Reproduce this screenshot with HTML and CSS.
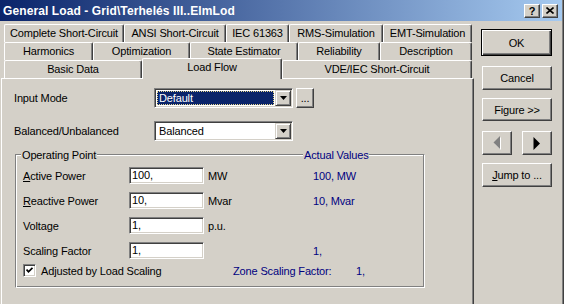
FILE: index.html
```html
<!DOCTYPE html>
<html lang="en">
<head>
  <meta charset="UTF-8">
  <meta name="viewport" content="width=device-width, initial-scale=1.0">
  <title>General Load - Load Flow</title>
  <link rel="stylesheet" href="styles.css">
</head>
<body>
  <div class="window">

    <div class="titlebar">
      <span class="title">General Load - Grid\Terhelés III..ElmLod</span>
      <button class="cap-btn help">?</button>
      <button class="cap-btn">
        <svg width="8" height="7" viewBox="0 0 8 7"><path d="M0.5 0.5 L7.5 6.5 M7.5 0.5 L0.5 6.5" stroke="#000" stroke-width="1.6"/></svg>
      </button>
    </div>

    <div class="main">
      <div class="tabctl">
        <div class="tabrow row1">
          <div class="tab">Complete Short-Circuit</div>
          <div class="tab">ANSI Short-Circuit</div>
          <div class="tab">IEC 61363</div>
          <div class="tab">RMS-Simulation</div>
          <div class="tab">EMT-Simulation</div>
        </div>
        <div class="tabrow row2">
          <div class="tab">Harmonics</div>
          <div class="tab">Optimization</div>
          <div class="tab">State Estimator</div>
          <div class="tab">Reliability</div>
          <div class="tab">Description</div>
        </div>
        <div class="tabrow row3">
          <div class="tab">Basic Data</div>
          <div class="tab sel">Load Flow</div>
          <div class="tab">VDE/IEC Short-Circuit</div>
        </div>

        <div class="panel">
          <div class="field-row">
            <span class="lbl">Input Mode</span>
            <div class="combo">
              <span class="combo-val focus">Default</span>
              <span class="drop"><svg width="7" height="4" viewBox="0 0 7 4"><path d="M0 0 H7 L3.5 4 Z" fill="#000"/></svg></span>
            </div>
            <button class="btn dots">...</button>
          </div>
          <div class="field-row second">
            <span class="lbl">Balanced/Unbalanced</span>
            <div class="combo">
              <span class="combo-val">Balanced</span>
              <span class="drop"><svg width="7" height="4" viewBox="0 0 7 4"><path d="M0 0 H7 L3.5 4 Z" fill="#000"/></svg></span>
            </div>
          </div>

          <div class="group">
            <div class="group-head">
              <span class="gline start"></span>
              <span class="gtitle">Operating Point</span>
              <span class="gline fill"></span>
              <span class="gtitle actual">Actual Values</span>
              <span class="gline end"></span>
            </div>
            <div class="group-body">
              <div class="values">
                <span><u>A</u>ctive Power</span>
                <div class="edit">100,</div>
                <span>MW</span>
                <span class="blue">100, MW</span>

                <span><u>R</u>eactive Power</span>
                <div class="edit">10,</div>
                <span>Mvar</span>
                <span class="blue">10, Mvar</span>

                <span>Voltage</span>
                <div class="edit">1,</div>
                <span>p.u.</span>
                <span></span>

                <span>Scaling Factor</span>
                <div class="edit">1,</div>
                <span></span>
                <span class="blue">1,</span>
              </div>
              <div class="check-row">
                <span class="checkbox">
                  <svg width="7" height="7" viewBox="0 0 7 7"><path d="M0.5 2.5 L2.5 4.8 L6.5 0.8" stroke="#000" stroke-width="1.8" fill="none"/></svg>
                </span>
                <span class="check-lbl">Adjusted by Load Scaling</span>
                <span class="blue zone">Zone Scaling Factor:</span>
                <span class="blue">1,</span>
              </div>
            </div>
          </div>
        </div>
      </div>

      <div class="side">
        <button class="btn default">OK</button>
        <button class="btn cancel">Cancel</button>
        <button class="btn figure">Figure &gt;&gt;</button>
        <div class="arrows">
          <button class="btn arrow">
            <svg width="9" height="14" viewBox="0 0 9 14"><path d="M8 1 L1.5 7.5 L8 14 Z" fill="#fff"/><path d="M7 0 L0.5 6.5 L7 13 Z" fill="#808080"/></svg>
          </button>
          <button class="btn arrow">
            <svg width="8" height="13" viewBox="0 0 8 13"><path d="M0.5 0 L7 6.5 L0.5 13 Z" fill="#000"/></svg>
          </button>
        </div>
        <button class="btn jump"><u>J</u>ump to ...</button>
      </div>
    </div>

  </div>
</body>
</html>
```

FILE: styles.css
```css
* {
    box-sizing: border-box;
}

body {
    margin: 0;
    background: #d4d0c8;
    color: #000;
    font-family: "Liberation Sans", Arial, sans-serif;
    font-size: 11px;
    letter-spacing: -0.15px;
}

.window {
    width: 564px;
    height: 304px;
    overflow: hidden;
    background: #d4d0c8;
    box-shadow: inset -1px 0 #404040, inset -2px 0 #808080;
}

/* title bar */
.titlebar {
    display: flex;
    align-items: center;
    height: 21px;
    margin-right: 2px;
    padding: 0 4px 0 3px;
    background: linear-gradient(to right, #0a246a, #a6caf0);
    color: #fff;
}
.title {
    flex: 1;
    font-size: 12px;
    font-weight: bold;
    letter-spacing: 0.1px;
    white-space: nowrap;
}
.cap-btn {
    display: flex;
    align-items: center;
    justify-content: center;
    width: 16px;
    height: 14px;
    padding: 0;
    background: #d4d0c8;
    border: 1px solid;
    border-color: #fff #404040 #404040 #fff;
    box-shadow: inset -1px -1px #808080;
    font: bold 11px "Liberation Sans", Arial, sans-serif;
    color: #000;
}
.cap-btn.help {
    margin-right: 2px;
}

/* body */
.main {
    display: flex;
    padding-top: 3px;
}
.tabctl {
    width: 473px;
    margin-left: 1px;
}

.tabrow {
    display: grid;
    height: 18px;
    padding-left: 3px;
}
.row1 { grid-template-columns: 120px 102px 63px 94px 89px; }
.row2 { grid-template-columns: 89px 97px 108px 82px 92px; }
.row3 { grid-template-columns: 138px 140px 190px; }

.tab {
    height: 18px;
    border-top: 1px solid #fff;
    border-left: 1px solid #fff;
    border-right: 1px solid #404040;
    border-radius: 2px 2px 0 0;
    box-shadow: inset -1px 0 #808080;
    text-align: center;
    line-height: 16px;
    white-space: nowrap;
}
.tab.sel {
    position: relative;
    z-index: 1;
    height: 21px;
    margin-top: -2px;
    background: #d4d0c8;
    line-height: 17px;
}

.panel {
    height: 230px;
    padding: 9px 0 0 12px;
    border-top: 1px solid #fff;
    border-left: 1px solid #fff;
    border-right: 1px solid #404040;
    box-shadow: inset -1px 0 #808080;
}

.field-row {
    display: flex;
    align-items: center;
    height: 20px;
}
.field-row.second {
    margin-top: 13px;
}
.lbl {
    width: 140px;
}

/* sunken controls */
.combo,
.edit,
.checkbox {
    background: #fff;
    border: 1px solid;
    border-color: #808080 #fff #fff #808080;
    box-shadow: inset 1px 1px #404040, inset -1px -1px #d4d0c8;
}
.combo {
    display: flex;
    width: 139px;
    height: 20px;
    padding: 1px;
}
.combo-val {
    flex: 1;
    margin: 1px;
    padding-left: 2px;
    line-height: 14px;
}
.combo-val.focus {
    background: #0a246a;
    color: #fff;
    outline: 1px dotted #e8d890;
    outline-offset: -1px;
}
.drop {
    display: flex;
    align-items: center;
    justify-content: center;
    width: 16px;
    background: #d4d0c8;
    border: 1px solid;
    border-color: #d4d0c8 #404040 #404040 #d4d0c8;
    box-shadow: inset 1px 1px #fff, inset -1px -1px #808080;
}

/* raised buttons */
.btn {
    padding: 0;
    background: #d4d0c8;
    border: 1px solid;
    border-color: #fff #404040 #404040 #fff;
    box-shadow: inset -1px -1px #808080;
    color: #000;
    font: inherit;
    letter-spacing: inherit;
}
.btn.dots {
    width: 18px;
    height: 20px;
    margin-left: 3px;
}

/* group box */
.group {
    width: 410px;
    margin: 7px 0 0 1px;
}
.group-head {
    display: flex;
    align-items: center;
    height: 14px;
}
.gline {
    height: 2px;
    border-top: 1px solid #808080;
    border-bottom: 1px solid #fff;
}
.gline.start {
    align-self: flex-end;
    width: 6px;
    height: 8px;
    border-bottom: none;
    border-left: 1px solid #808080;
    box-shadow: inset 1px 1px #fff;
}
.gline.fill {
    flex: 1;
}
.gline.end {
    align-self: flex-end;
    width: 56px;
    height: 8px;
    border-bottom: none;
    border-right: 1px solid #fff;
    box-shadow: inset -1px 0 #808080, inset 0 1px #fff;
}
.gtitle {
    padding: 0 1px;
    white-space: nowrap;
}
.gtitle.actual {
    width: 66px;
    color: #000080;
}

.group-body {
    padding: 5px 0 10px 7px;
    border-left: 1px solid #808080;
    border-right: 1px solid #fff;
    border-bottom: 1px solid #fff;
    box-shadow: inset 1px 0 #fff, inset -1px 0 #808080, inset 0 -1px #808080;
}
.values {
    display: grid;
    grid-template-columns: 106px 79px 105px auto;
    grid-auto-rows: 17px;
    row-gap: 8px;
    align-items: center;
}
.edit {
    width: 75px;
    height: 17px;
    padding-left: 2px;
    line-height: 15px;
}
.blue {
    color: #000080;
}

.check-row {
    display: flex;
    align-items: center;
    height: 13px;
    margin-top: 5px;
}
.checkbox {
    display: flex;
    align-items: center;
    justify-content: center;
    width: 13px;
    height: 13px;
}
.check-lbl {
    width: 192px;
    margin-left: 5px;
}
.zone {
    width: 123px;
}

/* right column */
.side {
    display: flex;
    flex-direction: column;
    width: 71px;
    margin-left: 7px;
    padding-top: 5px;
}
.side .btn {
    width: 70px;
    height: 24px;
    margin-left: 1px;
}
.side .btn.default {
    width: 71px;
    height: 27px;
    margin-left: 0;
    border-color: #000;
    box-shadow: inset 1px 1px #fff, inset -1px -1px #404040, inset -2px -2px #808080;
}
.side .btn.cancel {
    margin-top: 10px;
}
.side .btn.figure {
    height: 23px;
    margin-top: 8px;
}
.arrows {
    display: flex;
    justify-content: space-between;
    margin: 10px 0 0 1px;
}
.side .arrows .btn {
    display: flex;
    align-items: center;
    justify-content: center;
    width: 30px;
    margin-left: 0;
}
.side .btn.jump {
    margin-top: 8px;
}
```
